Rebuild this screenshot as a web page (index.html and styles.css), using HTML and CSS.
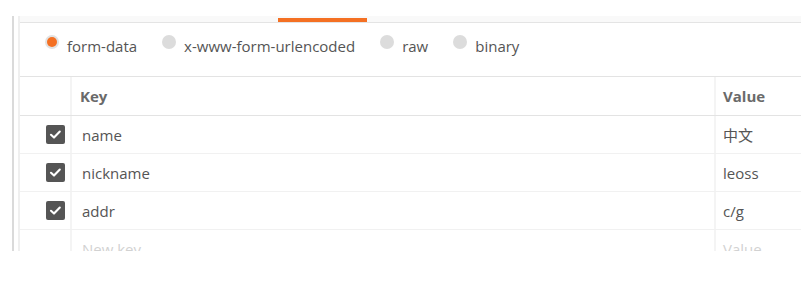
FILE: index.html
```html
<!DOCTYPE html>
<html>
<head>
<meta charset="utf-8">
<link rel="stylesheet" href="styles.css">
</head>
<body>
<div class="frame">
  <div class="content">
    <div class="tabbar"><div class="tab-active"></div></div>
    <div class="modes">
      <div class="mode"><span class="radio on"></span><span class="lbl">form-data</span></div>
      <div class="mode"><span class="radio"></span><span class="lbl">x-www-form-urlencoded</span></div>
      <div class="mode"><span class="radio"></span><span class="lbl">raw</span></div>
      <div class="mode"><span class="radio"></span><span class="lbl">binary</span></div>
    </div>
    <div class="table">
      <div class="row head">
        <div class="c-chk"></div>
        <div class="c-key">Key</div>
        <div class="c-val">Value</div>
      </div>
      <div class="row">
        <div class="c-chk"><span class="chk"><svg viewBox="0 0 19 19" width="19" height="19"><path d="M5 9.8 L8 12.6 L13.8 6.6" fill="none" stroke="#fff" stroke-width="2.1" stroke-linecap="round" stroke-linejoin="round"/></svg></span></div>
        <div class="c-key">name</div>
        <div class="c-val">中文</div>
      </div>
      <div class="row">
        <div class="c-chk"><span class="chk"><svg viewBox="0 0 19 19" width="19" height="19"><path d="M5 9.8 L8 12.6 L13.8 6.6" fill="none" stroke="#fff" stroke-width="2.1" stroke-linecap="round" stroke-linejoin="round"/></svg></span></div>
        <div class="c-key">nickname</div>
        <div class="c-val">leoss</div>
      </div>
      <div class="row">
        <div class="c-chk"><span class="chk"><svg viewBox="0 0 19 19" width="19" height="19"><path d="M5 9.8 L8 12.6 L13.8 6.6" fill="none" stroke="#fff" stroke-width="2.1" stroke-linecap="round" stroke-linejoin="round"/></svg></span></div>
        <div class="c-key">addr</div>
        <div class="c-val">c/g</div>
      </div>
      <div class="row new">
        <div class="c-chk"></div>
        <div class="c-key ph">New key</div>
        <div class="c-val ph">Value</div>
      </div>
    </div>
  </div>
</div>
</body>
</html>
```
FILE: styles.css
```css
html, body {
  margin: 0;
  padding: 0;
  background: #fff;
}
body {
  width: 801px;
  height: 286px;
  overflow: hidden;
  font-family: "Open Sans", "Noto Sans CJK SC", sans-serif;
  font-size: 15px;
  color: #555;
}
.frame {
  margin: 16px 0 0 12px;
  height: 235px;
  border-left: 2px solid #dadada;
  padding-left: 4px;
  overflow: hidden;
}
.content {
  border-left: 2px solid #efefef;
  height: 235px;
  overflow: hidden;
}
.tabbar {
  height: 6px;
  background: #f9f9f9;
  border-bottom: 1px solid #e4e4e4;
  display: flex;
  align-items: flex-end;
  padding-left: 258px;
}
.tab-active {
  width: 89px;
  height: 4px;
  background: #f47023;
}
.modes {
  height: 41px;
  padding-top: 12px;
  padding-left: 25px;
  display: flex;
  align-items: flex-start;
  border-bottom: 1px solid #e3e3e3;
}
.mode {
  display: flex;
  align-items: flex-start;
  margin-right: 25px;
}
.radio {
  width: 14px;
  height: 14px;
  border-radius: 50%;
  background: #dcdcdc;
  margin-right: 8px;
  display: flex;
  align-items: center;
  justify-content: center;
}
.radio.on {
  background: #e2e2e2;
}
.radio.on::after {
  content: "";
  width: 10px;
  height: 10px;
  border-radius: 50%;
  background: #f47023;
}
.lbl {
  line-height: 20px;
  margin-top: 1px;
  color: #555;
}
.table {
  display: flex;
  flex-direction: column;
}
.row {
  display: flex;
  height: 37px;
  border-bottom: 1px solid #f1f1f1;
}
.row.head {
  height: 38px;
  border-bottom: 1px solid #e3e3e3;
  font-weight: 700;
  color: #6a6a6a;
}
.c-chk {
  width: 52px;
  flex: none;
  border-right: 2px solid #f4f4f4;
  display: flex;
  align-items: center;
  padding-left: 26px;
  box-sizing: border-box;
}
.c-key {
  width: 644px;
  flex: none;
  border-right: 2px solid #f4f4f4;
  display: flex;
  align-items: center;
  padding-left: 10px;
  box-sizing: border-box;
}
.head .c-key {
  padding-left: 8px;
}
.c-val {
  flex: 1;
  display: flex;
  align-items: center;
  padding-left: 7px;
}
.chk {
  width: 19px;
  height: 19px;
  border-radius: 2px;
  background: #555;
  display: block;
}
.chk svg {
  display: block;
}
.ph {
  color: #d2d2d2;
}
.row.new {
  border-bottom: none;
}
```
